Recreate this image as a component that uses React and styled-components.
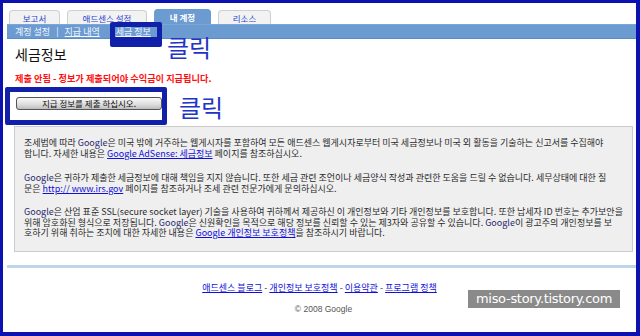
import React from 'react';
import styled, { createGlobalStyle } from 'styled-components';

const GlobalStyle = createGlobalStyle`
  body {
    margin: 0;
    background: #fff;
    font-family: "Noto Sans CJK KR", "Noto Sans", sans-serif;
  }
`;

const Frame = styled.div`
  position: relative;
  width: 640px;
  height: 336px;
  box-sizing: border-box;
  border: 3px solid #0c12b0;
  border-right-width: 4px;
  border-bottom-width: 4px;
  background: #fff;
  overflow: hidden;
`;

const TabRow = styled.div`
  display: flex;
  align-items: flex-end;
  gap: 7px;
  padding: 6px 0 0 6px;
`;

const Tab = styled.div`
  box-sizing: border-box;
  width: ${p => p.$w}px;
  height: ${p => (p.$active ? 15 : 14)}px;
  display: flex;
  align-items: center;
  justify-content: center;
  border: 1px solid ${p => (p.$active ? '#6b9bd0' : '#cfcfcf')};
  border-bottom: none;
  border-radius: 4px 4px 0 0;
  background: ${p => (p.$active ? '#6b9bd0' : '#f2f2f2')};
  color: ${p => (p.$active ? '#fff' : '#2a3ed0')};
  font-size: 8.5px;
  font-weight: ${p => (p.$active ? 700 : 400)};
`;

const SubNav = styled.div`
  height: 15px;
  margin-left: 4px;
  box-sizing: border-box;
  border-top: 1px solid #7aa6d8;
  border-bottom: 1px solid #5a8cc4;
  background: #6b9bd0;
  display: flex;
  align-items: center;
  gap: 6px;
  padding-left: 8px;
  font-size: 9px;
  color: #f2f6ff;
`;

const NavLink = styled.span`
  text-decoration: ${p => (p.$link ? 'underline' : 'none')};
  margin-left: ${p => p.$gap || 0}px;
`;

const Main = styled.div`
  padding: 0 3px 0 11px;
`;

const Title = styled.h1`
  margin: 6px 0 0 1px;
  font-size: 14px;
  line-height: 18px;
  font-weight: 400;
  color: #111;
`;

const Warning = styled.p`
  margin: 10px 0 0 1px;
  font-size: 9.2px;
  line-height: 11px;
  font-weight: 700;
  color: #ff1010;
`;

const SubmitButton = styled.button`
  display: block;
  margin: 13px 0 0 2px;
  width: 146px;
  height: 13px;
  padding: 0;
  border: 1px solid #555;
  border-radius: 3px;
  background: linear-gradient(#fafafa, #dcdcdc 60%, #bdbdbd);
  font-family: "Noto Sans CJK KR", sans-serif;
  font-size: 8.5px;
  line-height: 11px;
  color: #111;
`;

const InfoBox = styled.div`
  margin-top: 16px;
  border: 1px solid #cbcbcb;
  background: #efefef;
  padding: 11px 4px 12px 9px;
  color: #2b2b2b;
  font-size: 9px;
  line-height: 10.5px;
`;

const Para = styled.p`
  margin: ${p => p.$gap || 0}px 0 0;
  white-space: nowrap;
`;

const Brand = styled.span`
  color: #2a2a6e;
`;

const Link = styled.a`
  color: #1010d8;
  text-decoration: underline;
`;

const Divider = styled.div`
  height: 3px;
  margin: 13px 0 0 4px;
  background: #bdd4ea;
`;

const Footer = styled.div`
  display: flex;
  flex-direction: column;
  align-items: center;
  gap: 11px;
  margin-top: 14px;
  font-size: 9px;
  line-height: 11px;
`;

const FooterLinks = styled.div`
  color: #333;
  a {
    color: #1010d8;
    text-decoration: underline;
  }
`;

const Copy = styled.div`
  font-family: "Liberation Sans", Arial, sans-serif;
  color: #555;
  font-size: 8.5px;
  margin-left: 8px;
`;

const Highlight = styled.div`
  position: absolute;
  left: ${p => p.$x}px;
  top: ${p => p.$y}px;
  width: ${p => p.$w}px;
  height: ${p => p.$h}px;
  box-sizing: border-box;
  border: 5px solid #1020a8;
  border-bottom-width: ${p => p.$bottom || 5}px;
  border-radius: 2px;
`;

const ClickLabel = styled.div`
  position: absolute;
  left: ${p => p.$x}px;
  top: ${p => p.$y}px;
  font-size: 24px;
  line-height: 24px;
  color: #2234c8;
`;

const Watermark = styled.div`
  position: absolute;
  left: 465px;
  top: 287px;
  width: 152px;
  height: 18px;
  background: #8a8a8a;
  color: #fff;
  font-family: "DejaVu Sans", sans-serif;
  font-size: 13px;
  line-height: 18px;
  text-align: center;
  letter-spacing: -0.3px;
`;

export default function App() {
  return (
    <Frame>
      <GlobalStyle />
      <TabRow>
        <Tab $w={51}>보고서</Tab>
        <Tab $w={80}>애드센스 설정</Tab>
        <Tab $w={57} $active>내 계정</Tab>
        <Tab $w={53}>리소스</Tab>
      </TabRow>
      <SubNav>
        <NavLink>계정 설정</NavLink>
        <span>|</span>
        <NavLink $link>지급 내역</NavLink>
        <NavLink $link $gap={10}>세금 정보</NavLink>
      </SubNav>

      <Main>
        <Title>세금정보</Title>
        <Warning>제출 안됨 - 정보가 제출되어야 수익금이 지급됩니다.</Warning>
        <SubmitButton>지급 정보를 제출 하십시오.</SubmitButton>
        <InfoBox>
          <Para>
            조세법에 따라 <Brand>Google</Brand>은 미국 밖에 거주하는 웹게시자를 포함하여 모든 애드센스 웹게시자로부터 미국 세금정보나 미국 외 활동을 기술하는 신고서를 수집해야
            <br />
            합니다. 자세한 내용은 <Link>Google AdSense: 세금정보</Link> 페이지를 참조하십시오.
          </Para>
          <Para $gap={14}>
            <Brand>Google</Brand>은 귀하가 제출한 세금정보에 대해 책임을 지지 않습니다. 또한 세금 관련 조언이나 세금양식 작성과 관련한 도움을 드릴 수 없습니다. 세무상태에 대한 질
            <br />
            문은 <Link>http:// www.irs.gov</Link> 페이지를 참조하거나 조세 관련 전문가에게 문의하십시오.
          </Para>
          <Para $gap={13}>
            <Brand>Google</Brand>은 산업 표준 SSL(secure socket layer) 기술을 사용하여 귀하께서 제공하신 이 개인정보와 기타 개인정보를 보호합니다. 또한 납세자 ID 번호는 추가보안을
            <br />
            위해 암호화된 형식으로 저장됩니다. <Brand>Google</Brand>은 신원확인을 목적으로 해당 정보를 신뢰할 수 있는 제3자와 공유할 수 있습니다. <Brand>Google</Brand>이 광고주의 개인정보를 보
            <br />
            호하기 위해 취하는 조치에 대한 자세한 내용은 <Link>Google 개인정보 보호정책</Link>을 참조하시기 바랍니다.
          </Para>
        </InfoBox>
      </Main>

      <Divider />
      <Footer>
        <FooterLinks>
          <a>애드센스 블로그</a> - <a>개인정보 보호정책</a> - <a>이용약관</a> - <a>프로그램 정책</a>
        </FooterLinks>
        <Copy>© 2008 Google</Copy>
      </Footer>

      <Highlight $x={107} $y={19} $w={52} $h={25} $bottom={10} />
      <ClickLabel $x={164} $y={32}>클릭</ClickLabel>
      <Highlight $x={2} $y={84} $w={162} $h={38} />
      <ClickLabel $x={176} $y={92}>클릭</ClickLabel>
      <Watermark>miso-story.tistory.com</Watermark>
    </Frame>
  );
}
